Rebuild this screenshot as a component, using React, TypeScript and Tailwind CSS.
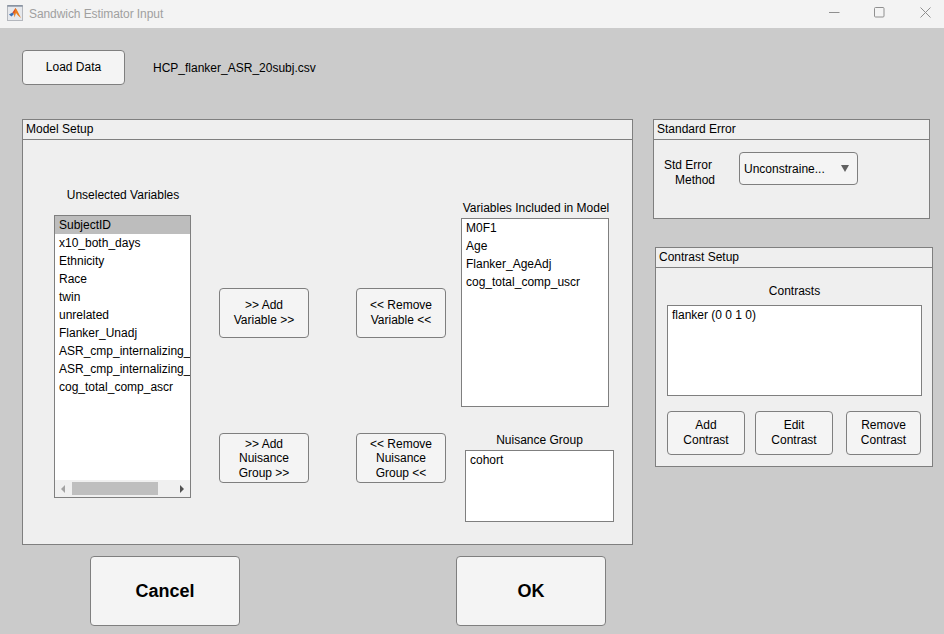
const font = "font-['Liberation_Sans',Arial,sans-serif]"

function Btn({ className, children }: { className: string; children: React.ReactNode }) {
  return (
    <button className={`flex flex-col items-center justify-center shrink-0 bg-[#f4f4f4] border border-[#7f7f7f] rounded-[4px] text-[12px] leading-[15px] text-black ${className}`}>
      {children}
    </button>
  )
}

function Panel({ title, className, children }: { title: string; className: string; children: React.ReactNode }) {
  return (
    <div className={`flex flex-col bg-[#efefef] border border-[#7f7f7f] ${className}`}>
      <div className="h-[20px] shrink-0 border-b border-[#7f7f7f] pl-[3px] text-[12px] leading-[18px] text-black">{title}</div>
      {children}
    </div>
  )
}

function ListBox({ items, className }: { items: string[]; className: string }) {
  return (
    <div className={`bg-white border border-[#7f7f7f] pl-[4px] text-[12px] leading-[18px] text-black ${className}`}>
      {items.map((item) => (
        <div key={item} className="whitespace-nowrap">{item}</div>
      ))}
    </div>
  )
}

const unselected = [
  'x10_both_days',
  'Ethnicity',
  'Race',
  'twin',
  'unrelated',
  'Flanker_Unadj',
  'ASR_cmp_internalizing_',
  'ASR_cmp_internalizing_',
  'cog_total_comp_ascr',
]

export default function App() {
  return (
    <div className={`w-[944px] h-[634px] flex flex-col overflow-hidden bg-[#cbcbcb] ${font}`}>
      {/* Title bar */}
      <div className="h-[28px] shrink-0 flex items-center bg-[#f3f3f3]">
        <svg width="16" height="16" viewBox="0 0 16 16" className="ml-[7px] mb-[3px]">
          <rect x="0.5" y="0.5" width="15" height="15" fill="#e6e8ec" stroke="#b4b7bd" />
          <path d="M0.5 1H15.5" stroke="#5f6f85" />
          <path d="M2 9.5 L5.5 7.5 L7 9 L4.5 11.5 Z" fill="#3a6fb5" />
          <path d="M5.5 7.5 L8.5 3 L10 6 L7 9 Z" fill="#d8481f" />
          <path d="M8.5 3 L10.5 6 L14 13 L11 10.5 L9 8 L7.5 12.5 L7 9 Z" fill="#ea7c1e" />
        </svg>
        <span className="ml-[6px] text-[12px] tracking-[-0.08px] text-[#a0a0a0]">Sandwich Estimator Input</span>
        <div className="ml-auto flex items-center">
          <svg width="11" height="11" viewBox="0 0 11 11" className="mr-[34px] mb-[4px]"><path d="M0 5.5H10.5" stroke="#8f8f8f" /></svg>
          <svg width="11" height="11" viewBox="0 0 11 11" className="mr-[35px] mb-[4px]"><rect x="0.5" y="0.5" width="9.5" height="9.5" rx="1" fill="none" stroke="#8f8f8f" /></svg>
          <svg width="11" height="11" viewBox="0 0 11 11" className="mr-[13px] mb-[4px]"><path d="M0.5 0.5L10.5 10.5M10.5 0.5L0.5 10.5" stroke="#8f8f8f" /></svg>
        </div>
      </div>

      {/* Load row */}
      <div className="flex items-center mt-[22px] ml-[22px] h-[35px]">
        <Btn className="w-[103px] h-[35px]">Load Data</Btn>
        <span className="ml-[28px] text-[12px] text-black">HCP_flanker_ASR_20subj.csv</span>
      </div>

      <div className="flex mt-[34px] ml-[22px]">
        <div className="flex flex-col">
          {/* Model Setup */}
          <Panel title="Model Setup" className="w-[611px] h-[426px]">
            <div className="flex pl-[31px]">
              <div className="w-[137px] flex flex-col">
                <div className="mt-[46px] h-[18px] pl-[1px] text-center text-[12px] leading-[18px] text-black">Unselected Variables</div>
                <div className="mt-[11px] h-[283px] flex flex-col bg-white border border-[#7f7f7f] text-[12px] leading-[18px] text-black overflow-hidden">
                  <div className="flex-1 overflow-hidden">
                    <div className="h-[18px] bg-[#bdbdbd] pl-[4px]">SubjectID</div>
                    {unselected.map((item, i) => (
                      <div key={i} className="pl-[4px] whitespace-nowrap">{item}</div>
                    ))}
                  </div>
                  <div className="h-[17px] shrink-0 flex items-center bg-[#f0f0f0]">
                    <div className="ml-[6px] w-0 h-0 border-y-[4px] border-y-transparent border-r-[4px] border-r-[#a3a3a3]" />
                    <div className="ml-[7px] w-[86px] h-[13px] bg-[#bfbfbf]" />
                    <div className="ml-[22px] w-0 h-0 border-y-[4px] border-y-transparent border-l-[4px] border-l-[#505050]" />
                  </div>
                </div>
              </div>

              <div className="ml-[28px] w-[90px] flex flex-col">
                <Btn className="mt-[148px] w-[90px] h-[50px]">
                  <span>&gt;&gt; Add</span>
                  <span>Variable &gt;&gt;</span>
                </Btn>
                <Btn className="mt-[95px] w-[90px] h-[50px] pt-[1px] !leading-[14.5px]">
                  <span>&gt;&gt; Add</span>
                  <span>Nuisance</span>
                  <span>Group &gt;&gt;</span>
                </Btn>
              </div>

              <div className="ml-[47px] w-[90px] flex flex-col">
                <Btn className="mt-[148px] w-[90px] h-[50px]">
                  <span>&lt;&lt; Remove</span>
                  <span>Variable &lt;&lt;</span>
                </Btn>
                <Btn className="mt-[95px] w-[90px] h-[50px] pt-[1px] !leading-[14.5px]">
                  <span>&lt;&lt; Remove</span>
                  <span>Nuisance</span>
                  <span>Group &lt;&lt;</span>
                </Btn>
              </div>

              <div className="ml-[15px] w-[155px] flex flex-col">
                <div className="mt-[59px] ml-[1px] h-[18px] w-[148px] text-center text-[12px] leading-[18px] whitespace-nowrap text-black">Variables Included in Model</div>
                <ListBox items={['M0F1', 'Age', 'Flanker_AgeAdj', 'cog_total_comp_uscr']} className="mt-[1px] w-[148px] h-[189px]" />
                <div className="mt-[24px] ml-[4px] w-[149px] h-[18px] text-center text-[12px] leading-[18px] text-black">Nuisance Group</div>
                <ListBox items={['cohort']} className="ml-[4px] mt-[1px] w-[149px] h-[72px]" />
              </div>
            </div>
          </Panel>

          <div className="flex mt-[11px] ml-[68px]">
            <Btn className="w-[150px] h-[70px] !text-[18px] font-bold">Cancel</Btn>
            <Btn className="ml-[216px] w-[150px] h-[70px] !text-[18px] font-bold">OK</Btn>
          </div>
        </div>

        <div className="ml-[20px] flex flex-col">
          <Panel title="Standard Error" className="w-[277px] h-[100px]">
            <div className="flex pl-[10px] pt-[12px]">
              <div className="mt-[6px] text-[12px] leading-[15px] text-black">
                <div>Std Error</div>
                <div className="pl-[11px]">Method</div>
              </div>
              <div className="ml-[24px] w-[119px] h-[33px] flex items-center bg-[#f4f4f4] border border-[#7f7f7f] rounded-[4px] pl-[4px] text-[12px] text-black">
                <span>Unconstraine...</span>
                <div className="ml-auto mr-[8px] w-0 h-0 border-x-[4.5px] border-x-transparent border-t-[7px] border-t-[#606060]" />
              </div>
            </div>
          </Panel>

          <Panel title="Contrast Setup" className="mt-[28px] ml-[2px] w-[278px] h-[220px]">
            <div className="flex flex-col pl-[11px]">
              <div className="mt-[14px] w-[255px] h-[18px] text-center text-[12px] leading-[18px] text-black">Contrasts</div>
              <ListBox items={['flanker (0 0 1 0)']} className="mt-[5px] w-[255px] h-[91px]" />
              <div className="flex mt-[15px]">
                <Btn className="w-[78px] h-[44px]">
                  <span>Add</span>
                  <span>Contrast</span>
                </Btn>
                <Btn className="ml-[10px] w-[78px] h-[44px]">
                  <span>Edit</span>
                  <span>Contrast</span>
                </Btn>
                <Btn className="ml-[13px] w-[75px] h-[44px]">
                  <span>Remove</span>
                  <span>Contrast</span>
                </Btn>
              </div>
            </div>
          </Panel>
        </div>
      </div>
    </div>
  )
}
